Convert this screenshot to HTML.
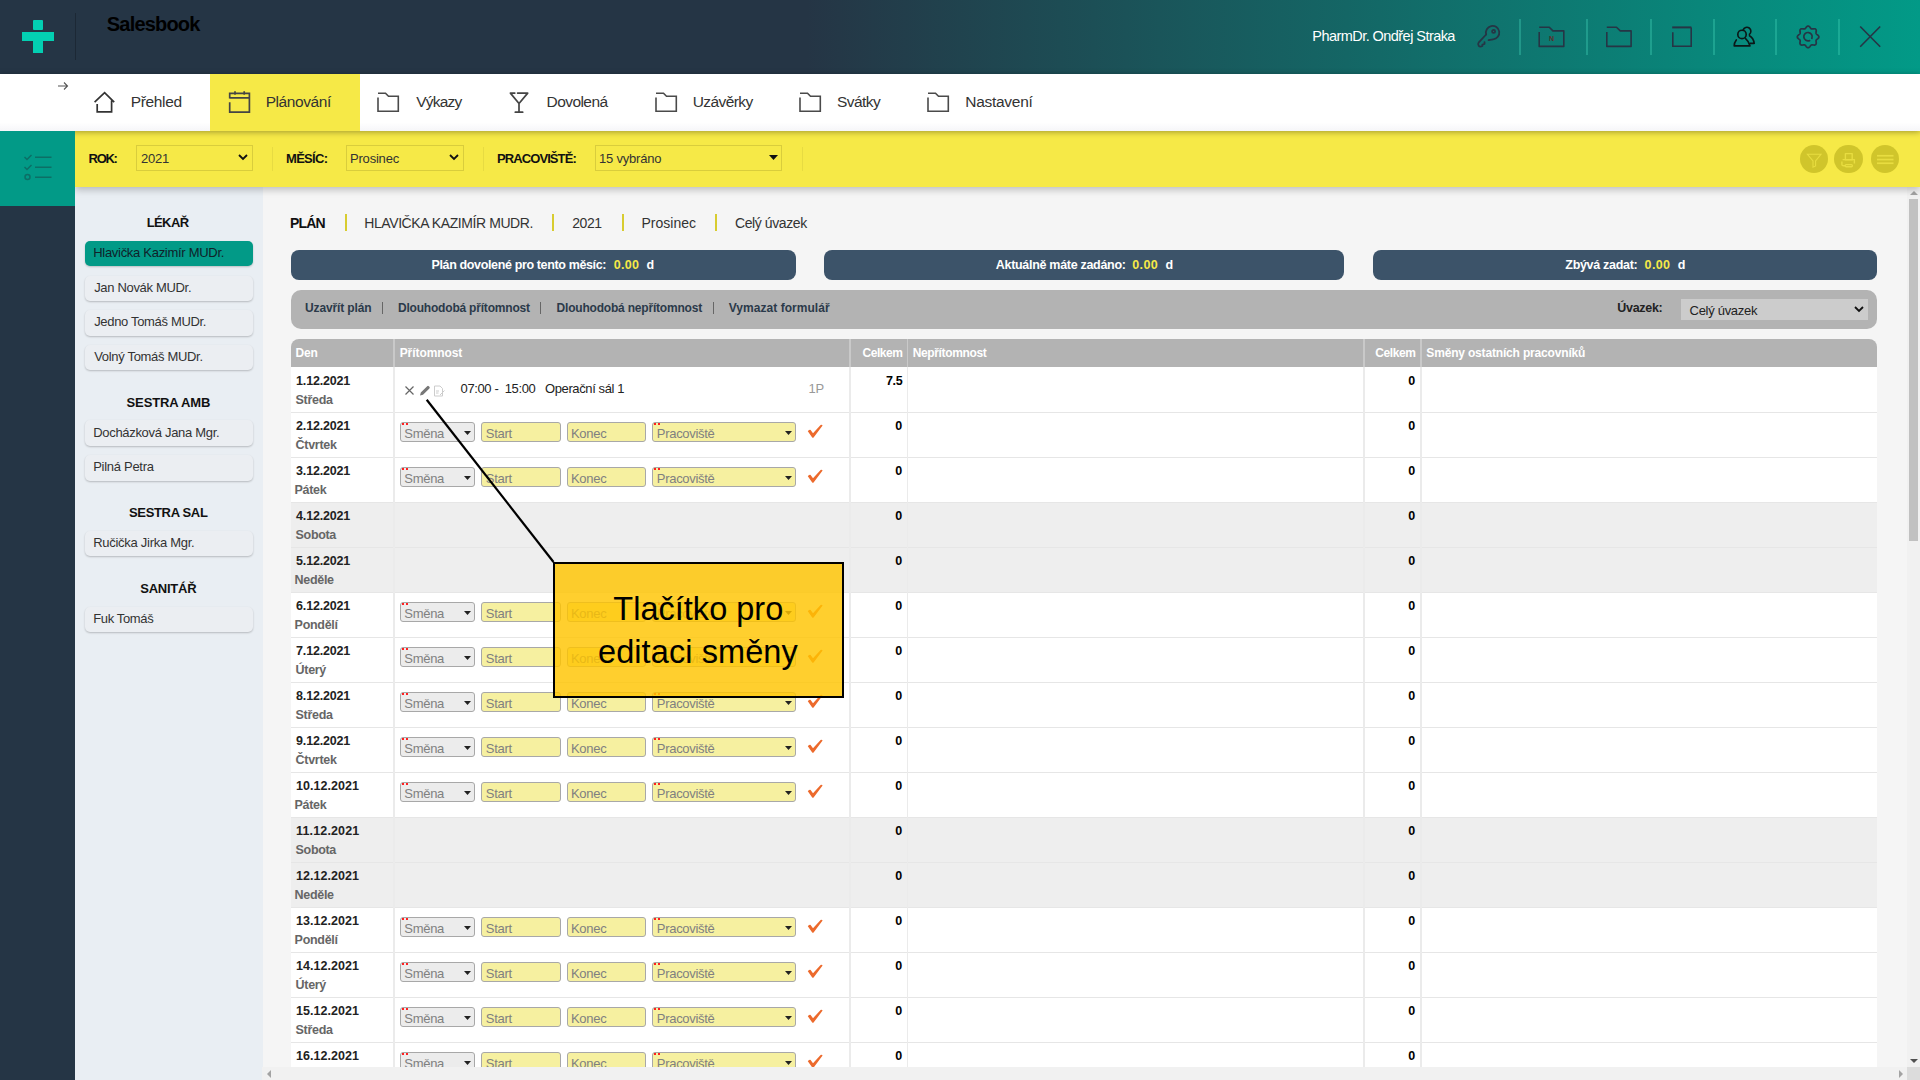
<!DOCTYPE html><html><head><meta charset="utf-8"><title>Salesbook</title><style>
*{box-sizing:border-box;margin:0;padding:0}
html,body{width:1920px;height:1080px;overflow:hidden;background:#f5f5f5;font-family:"Liberation Sans",sans-serif;color:#333}
.a{position:absolute}
.t{position:absolute;white-space:nowrap;line-height:1}
svg{overflow:visible}
</style></head><body>
<div class="a" style="left:0px;top:0px;width:1920px;height:74px;background:linear-gradient(90deg,#253545 0%,#253545 42%,#029a87 100%);"></div>
<div class="a" style="left:33px;top:20px;width:10px;height:10px;background:#03cfb2;border-radius:1px"></div>
<div class="a" style="left:22px;top:32px;width:32px;height:9px;background:#03cfb2;"></div>
<div class="a" style="left:33px;top:41px;width:10px;height:12px;background:#03cfb2;"></div>
<div class="a" style="left:75px;top:13px;width:1px;height:47px;background:#1c2835;"></div>
<div class="t" style="left:106.80px;top:14.17px;font-size:20px;font-weight:700;color:#000;letter-spacing:-0.812px;">Salesbook</div>
<div class="t" style="left:1312.30px;top:29.43px;font-size:14.5px;font-weight:400;color:#fff;letter-spacing:-0.552px;">PharmDr. Ondřej Straka</div>
<svg class="a" style="left:1476px;top:23px" width="26" height="26" viewBox="0 0 26 26"><g fill="none" stroke="#263545" stroke-width="1.8" stroke-linecap="round" stroke-linejoin="round"><path d="M10.15 11.5 A6.7 6.7 0 1 1 17.1 16.3 L12.6 17.2"/><path d="M10.15 11.5 L2.8 19.3 Q1.6 21.2 2.6 22.6 Q3.6 23.9 5.2 23.5 L6.4 23 V21.6 L8.5 21 V19.1"/><circle cx="17.6" cy="8.4" r="1.5"/></g></svg>
<div class="a" style="left:1519px;top:19px;width:1.5px;height:36px;background:rgba(70,215,185,0.35);"></div>
<div class="a" style="left:1586px;top:19px;width:1.5px;height:36px;background:rgba(70,215,185,0.35);"></div>
<div class="a" style="left:1650px;top:19px;width:1.5px;height:36px;background:rgba(70,215,185,0.35);"></div>
<div class="a" style="left:1713px;top:19px;width:1.5px;height:36px;background:rgba(70,215,185,0.35);"></div>
<div class="a" style="left:1775px;top:19px;width:1.5px;height:36px;background:rgba(70,215,185,0.35);"></div>
<div class="a" style="left:1838px;top:19px;width:1.5px;height:36px;background:rgba(70,215,185,0.35);"></div>
<svg class="a" style="left:1536px;top:24px" width="30" height="26" viewBox="0 0 30 26"><g fill="none" stroke="#263545" stroke-width="1.6" stroke-linejoin="round"><path d="M3.2 3.2 H13.3 L16.9 6.9 H27.8 V22.4 H3.2 V8"/></g><text x="15.6" y="16.9" text-anchor="middle" font-family="Liberation Sans" font-weight="700" font-size="7" fill="#5a2e2a">N</text></svg>
<svg class="a" style="left:1604px;top:24px" width="30" height="26" viewBox="0 0 30 26"><g fill="none" stroke="#263545" stroke-width="1.6" stroke-linejoin="round"><path d="M2.8 3.2 H12.5 L16.3 6.9 H27.1 V22.4 H2.8 V8"/></g></svg>
<svg class="a" style="left:1670px;top:24px" width="26" height="26" viewBox="0 0 26 26"><g fill="none" stroke="#263545"><path d="M2.2 3.4 H21.4" stroke-width="2"/><path d="M21.2 3.4 V22.2 H2.8 V8.2" stroke-width="1.6"/></g></svg>
<svg class="a" style="left:1728px;top:22px" width="32" height="28" viewBox="0 0 32 28"><g fill="none" stroke="#0b1818" stroke-width="1.65" stroke-linejoin="round" stroke-linecap="round"><circle cx="14" cy="12.4" r="4.2"/><path d="M15.2 7.9 A3.95 3.95 0 1 1 21.4 12.3"/><path d="M8.3 17.9 Q6.2 20.5 6.2 23.9 H22 Q21 19.5 17.6 16.6"/><path d="M21.5 13.7 Q25.5 16 26.2 21.3 H22"/></g></svg>
<svg class="a" style="left:1792px;top:22px" width="32" height="30" viewBox="0 0 32 30"><g fill="none" stroke="#263545" stroke-width="1.7" stroke-linecap="round"><path d="M26.90 14.90 L26.84 15.32 L26.67 15.73 L26.40 16.12 L26.05 16.48 L25.66 16.80 L25.27 17.10 L24.89 17.38 L24.56 17.65 L24.31 17.93 L24.14 18.23 L24.05 18.56 L24.03 18.94 L24.07 19.36 L24.14 19.82 L24.21 20.32 L24.25 20.82 L24.24 21.32 L24.16 21.78 L23.99 22.20 L23.74 22.54 L23.40 22.79 L22.98 22.96 L22.52 23.04 L22.02 23.05 L21.52 23.01 L21.02 22.94 L20.56 22.87 L20.14 22.83 L19.76 22.85 L19.43 22.94 L19.13 23.11 L18.85 23.36 L18.58 23.69 L18.30 24.07 L18.00 24.46 L17.68 24.85 L17.32 25.20 L16.93 25.47 L16.52 25.64 L16.10 25.70 L15.68 25.64 L15.27 25.47 L14.88 25.20 L14.52 24.85 L14.20 24.46 L13.90 24.07 L13.62 23.69 L13.35 23.36 L13.07 23.11 L12.77 22.94 L12.44 22.85 L12.06 22.83 L11.64 22.87 L11.18 22.94 L10.68 23.01 L10.18 23.05 L9.68 23.04 L9.22 22.96 L8.80 22.79 L8.46 22.54 L8.21 22.20 L8.04 21.78 L7.96 21.32 L7.95 20.82 L7.99 20.32 L8.06 19.82 L8.13 19.36 L8.17 18.94 L8.15 18.56 L8.06 18.23 L7.89 17.93 L7.64 17.65 L7.31 17.38 L6.93 17.10 L6.54 16.80 L6.15 16.48 L5.80 16.12 L5.53 15.73 L5.36 15.32 L5.30 14.90 L5.36 14.48 L5.53 14.07 L5.80 13.68 L6.15 13.32 L6.54 13.00 L6.93 12.70 L7.31 12.42 L7.64 12.15 L7.89 11.87 L8.06 11.57 L8.15 11.24 L8.17 10.86 L8.13 10.44 L8.06 9.98 L7.99 9.48 L7.95 8.98 L7.96 8.48 L8.04 8.02 L8.21 7.60 L8.46 7.26 L8.80 7.01 L9.22 6.84 L9.68 6.76 L10.18 6.75 L10.68 6.79 L11.18 6.86 L11.64 6.93 L12.06 6.97 L12.44 6.95 L12.77 6.86 L13.07 6.69 L13.35 6.44 L13.62 6.11 L13.90 5.73 L14.20 5.34 L14.52 4.95 L14.88 4.60 L15.27 4.33 L15.68 4.16 L16.10 4.10 L16.52 4.16 L16.93 4.33 L17.32 4.60 L17.68 4.95 L18.00 5.34 L18.30 5.73 L18.58 6.11 L18.85 6.44 L19.13 6.69 L19.43 6.86 L19.76 6.95 L20.14 6.97 L20.56 6.93 L21.02 6.86 L21.52 6.79 L22.02 6.75 L22.52 6.76 L22.98 6.84 L23.40 7.01 L23.74 7.26 L23.99 7.60 L24.16 8.02 L24.24 8.48 L24.25 8.98 L24.21 9.48 L24.14 9.98 L24.07 10.44 L24.03 10.86 L24.05 11.24 L24.14 11.57 L24.31 11.87 L24.56 12.15 L24.89 12.42 L25.27 12.70 L25.66 13.00 L26.05 13.32 L26.40 13.68 L26.67 14.07 L26.84 14.48Z"/><path d="M19.87 16.34 A4.2 4.2 0 1 0 17.57 18.59"/></g></svg>
<svg class="a" style="left:1859px;top:25px" width="23" height="23" viewBox="0 0 23 23"><g fill="none" stroke="#263545" stroke-width="1.6"><path d="M1.2 1.5 L21.2 21.8 M21.2 1.5 L1.2 21.8"/></g></svg>
<div class="a" style="left:1907px;top:187px;width:13px;height:880px;background:#f1f1f1;"></div>
<div class="a" style="left:1909px;top:199px;width:9px;height:342px;background:#c1c1c1;"></div>
<svg class="a" style="left:1908.5px;top:189px" width="10" height="8" viewBox="0 0 10 8"><path d="M1 6 H9 L5 2 Z" fill="#a3a3a3"/></svg>
<svg class="a" style="left:1908.5px;top:1057px" width="10" height="8" viewBox="0 0 10 8"><path d="M1 2 H9 L5 6 Z" fill="#505050"/></svg>
<div class="a" style="left:75px;top:187px;width:188px;height:893px;background:#e9eef3;"></div>
<div class="a" style="left:75px;top:131px;width:1845px;height:56px;background:#f6e947;box-shadow:0 3px 7px rgba(0,0,0,0.22)"></div>
<div class="a" style="left:0px;top:74px;width:1920px;height:57px;background:linear-gradient(180deg,#fff 0%,#fff 85%,#f6f6f9 100%);box-shadow:0 1px 6px rgba(0,0,0,0.35)"></div>
<div class="a" style="left:210px;top:74px;width:150px;height:57px;background:#f6e947;"></div>
<svg class="a" style="left:56px;top:80px" width="14" height="12" viewBox="0 0 14 12"><g fill="none" stroke="#555" stroke-width="1.1"><path d="M2 6 H11.5 M8 2.5 L11.5 6 L8 9.5"/></g></svg>
<svg class="a" style="left:92px;top:90px" width="24" height="24" viewBox="0 0 24 24"><g fill="none" stroke="#333" stroke-width="1.7" stroke-linejoin="miter"><path d="M2.6 12.2 L12.6 2.6 L22.2 12.2 M5.2 13.9 V21.8 H19.6 V10.4"/></g></svg>
<div class="t" style="left:130.70px;top:94.08px;font-size:15.5px;font-weight:400;color:#333;letter-spacing:-0.333px;">Přehled</div>
<svg class="a" style="left:228px;top:90px" width="24" height="24" viewBox="0 0 24 24"><g fill="none" stroke="#444" stroke-width="1.7"><path d="M1.7 8.6 V3.4 H21.4 V22.2 H1.7 V12.2 M1.7 7.8 H21.4 M7 1.2 V4.8 M16.2 1.2 V4.8"/></g></svg>
<div class="t" style="left:265.70px;top:94.08px;font-size:15.5px;font-weight:400;color:#333;letter-spacing:-0.425px;">Plánování</div>
<svg class="a" style="left:377px;top:91px" width="24" height="22" viewBox="0 0 24 22"><g fill="none" stroke="#4a4a4a" stroke-width="1.6"><path d="M1 2.3 H8.5 L11.5 5.3 H21.3 V20.3 H1 V6.5"/></g></svg>
<div class="t" style="left:416.20px;top:94.08px;font-size:15.5px;font-weight:400;color:#333;letter-spacing:-0.760px;">Výkazy</div>
<svg class="a" style="left:508px;top:90px" width="24" height="24" viewBox="0 0 24 24"><g fill="none" stroke="#444" stroke-width="1.7" stroke-linecap="round" stroke-linejoin="round"><path d="M6.8 3.1 H2.4 L11 13.5 L19.7 3.1 H9.6 M11 13.5 V22 M7.3 22.2 H14.7"/></g></svg>
<div class="t" style="left:546.50px;top:94.08px;font-size:15.5px;font-weight:400;color:#333;letter-spacing:-0.557px;">Dovolená</div>
<svg class="a" style="left:655px;top:91px" width="24" height="22" viewBox="0 0 24 22"><g fill="none" stroke="#4a4a4a" stroke-width="1.6"><path d="M1 2.3 H8.5 L11.5 5.3 H21.3 V20.3 H1 V6.5"/></g></svg>
<div class="t" style="left:692.70px;top:94.08px;font-size:15.5px;font-weight:400;color:#333;letter-spacing:-0.571px;">Uzávěrky</div>
<svg class="a" style="left:799px;top:91px" width="24" height="22" viewBox="0 0 24 22"><g fill="none" stroke="#4a4a4a" stroke-width="1.6"><path d="M1 2.3 H8.5 L11.5 5.3 H21.3 V20.3 H1 V6.5"/></g></svg>
<div class="t" style="left:837.00px;top:94.08px;font-size:15.5px;font-weight:400;color:#333;letter-spacing:-0.560px;">Svátky</div>
<svg class="a" style="left:927px;top:91px" width="24" height="22" viewBox="0 0 24 22"><g fill="none" stroke="#4a4a4a" stroke-width="1.6"><path d="M1 2.3 H8.5 L11.5 5.3 H21.3 V20.3 H1 V6.5"/></g></svg>
<div class="t" style="left:965.30px;top:94.08px;font-size:15.5px;font-weight:400;color:#333;letter-spacing:-0.287px;">Nastavení</div>
<div class="a" style="left:0px;top:131px;width:75px;height:949px;background:#253545;"></div>
<div class="a" style="left:0px;top:131px;width:75px;height:75px;background:#029a87;"></div>
<svg class="a" style="left:22px;top:152px" width="32" height="30" viewBox="0 0 32 30"><g fill="none" stroke="#0c6f66" stroke-width="1.5"><path d="M2.5 5 L5 7.5 L9.5 3 M2.5 15 L5 17.5 L9.5 13"/><circle cx="5.5" cy="25" r="2.5"/><path d="M13 5.2 H29.5 M13 15.2 H29.5 M13 25.2 H29.5"/></g></svg>
<div class="t" style="left:88.60px;top:152.00px;font-size:13px;font-weight:700;color:#111;letter-spacing:-1.300px;">ROK:</div>
<div class="a" style="left:136px;top:145px;width:117px;height:26px;background:transparent;border:1px solid #d9cd3c"></div>
<div class="t" style="left:141.00px;top:151.50px;font-size:13px;font-weight:400;color:#333;letter-spacing:-0.200px;">2021</div>
<svg class="a" style="left:238px;top:154px" width="10" height="7" viewBox="0 0 10 7"><path d="M1 1 L5 5 L9 1" fill="none" stroke="#111" stroke-width="1.8"/></svg>
<div class="a" style="left:272px;top:147px;width:1px;height:24px;background:rgba(0,0,0,0.06);"></div>
<div class="t" style="left:286.00px;top:152.00px;font-size:13px;font-weight:700;color:#111;letter-spacing:-0.700px;">MĚSÍC:</div>
<div class="a" style="left:346px;top:145px;width:118px;height:26px;background:transparent;border:1px solid #d9cd3c"></div>
<div class="t" style="left:350.00px;top:151.50px;font-size:13px;font-weight:400;color:#333;letter-spacing:-0.200px;">Prosinec</div>
<svg class="a" style="left:449px;top:154px" width="10" height="7" viewBox="0 0 10 7"><path d="M1 1 L5 5 L9 1" fill="none" stroke="#111" stroke-width="1.8"/></svg>
<div class="a" style="left:483px;top:147px;width:1px;height:24px;background:rgba(0,0,0,0.06);"></div>
<div class="t" style="left:497.00px;top:152.00px;font-size:13px;font-weight:700;color:#111;letter-spacing:-0.910px;">PRACOVIŠTĚ:</div>
<div class="a" style="left:595px;top:145px;width:187px;height:26px;background:transparent;border:1px solid #d9cd3c"></div>
<div class="t" style="left:599.00px;top:151.50px;font-size:13px;font-weight:400;color:#333;letter-spacing:-0.200px;">15 vybráno</div>
<svg class="a" style="left:769px;top:155px" width="9" height="6" viewBox="0 0 9 6"><path d="M0 0 H9 L4.5 5 Z" fill="#111"/></svg>
<div class="a" style="left:802px;top:147px;width:1px;height:24px;background:rgba(0,0,0,0.06);"></div>
<div class="a" style="left:1799.55px;top:144.6px;width:28.4px;height:28.4px;background:#d0c52b;border-radius:50%"></div>
<div class="a" style="left:1834.3px;top:144.6px;width:28.4px;height:28.4px;background:#d0c52b;border-radius:50%"></div>
<div class="a" style="left:1870.8px;top:144.6px;width:28.4px;height:28.4px;background:#d0c52b;border-radius:50%"></div>
<svg class="a" style="left:1799.6px;top:144.6px" width="28.4" height="28.4" viewBox="0 0 28.4 28.4"><g fill="none" stroke="#e8dd40" stroke-width="1.1"><path d="M7.4 9.3 H21 L15.6 16 V21 L13 22.2 V16 Z"/></g></svg>
<svg class="a" style="left:1834.3px;top:144.6px" width="28.4" height="28.4" viewBox="0 0 28.4 28.4"><g fill="none" stroke="#e8dd40" stroke-width="1.4" stroke-linejoin="round"><rect x="11.4" y="8.6" width="6.8" height="6.3"/><path d="M8.6 14.6 H20.4 V18.6"/><path d="M7.9 16.6 V19.6 Q7.9 20.8 9.6 20.8 H11"/><rect x="11.2" y="19.6" width="7.2" height="2.1" rx="1"/></g></svg>
<svg class="a" style="left:1870.8px;top:144.6px" width="28.4" height="28.4" viewBox="0 0 28.4 28.4"><g fill="#e8dd40"><rect x="6" y="9.9" width="16.5" height="1.7"/><rect x="6" y="13.7" width="16.5" height="1.7"/><rect x="6" y="17.4" width="16.5" height="1.7"/></g></svg>
<div class="t" style="left:146.75px;top:216.10px;font-size:13px;font-weight:700;color:#111;letter-spacing:-0.625px;">LÉKAŘ</div>
<div class="a" style="left:85px;top:240.7px;width:168px;height:25.5px;background:#029a87;border-radius:5px;box-shadow:0 1px 2px rgba(0,0,0,0.2)"></div>
<div class="t" style="left:93.20px;top:246.10px;font-size:13px;font-weight:400;color:#10222a;letter-spacing:-0.289px;">Hlavička Kazimír MUDr.</div>
<div class="a" style="left:85px;top:275.5px;width:168px;height:25.5px;background:#ebeef2;border-radius:5px;box-shadow:0 1px 2px rgba(0,0,0,0.22)"></div>
<div class="t" style="left:94.20px;top:280.90px;font-size:13px;font-weight:400;color:#333;letter-spacing:-0.325px;">Jan Novák MUDr.</div>
<div class="a" style="left:85px;top:310px;width:168px;height:25.5px;background:#ebeef2;border-radius:5px;box-shadow:0 1px 2px rgba(0,0,0,0.22)"></div>
<div class="t" style="left:94.20px;top:315.40px;font-size:13px;font-weight:400;color:#333;letter-spacing:-0.329px;">Jedno Tomáš MUDr.</div>
<div class="a" style="left:85px;top:344.7px;width:168px;height:25.5px;background:#ebeef2;border-radius:5px;box-shadow:0 1px 2px rgba(0,0,0,0.22)"></div>
<div class="t" style="left:94.20px;top:350.10px;font-size:13px;font-weight:400;color:#333;letter-spacing:-0.318px;">Volný Tomáš MUDr.</div>
<div class="t" style="left:126.55px;top:396.20px;font-size:13px;font-weight:700;color:#111;letter-spacing:-0.122px;">SESTRA AMB</div>
<div class="a" style="left:85px;top:420.2px;width:168px;height:25.5px;background:#ebeef2;border-radius:5px;box-shadow:0 1px 2px rgba(0,0,0,0.22)"></div>
<div class="t" style="left:93.20px;top:425.60px;font-size:13px;font-weight:400;color:#333;letter-spacing:-0.308px;">Docházková Jana Mgr.</div>
<div class="a" style="left:85px;top:455px;width:168px;height:25.5px;background:#ebeef2;border-radius:5px;box-shadow:0 1px 2px rgba(0,0,0,0.22)"></div>
<div class="t" style="left:93.20px;top:460.40px;font-size:13px;font-weight:400;color:#333;letter-spacing:-0.284px;">Pilná Petra</div>
<div class="t" style="left:129.00px;top:506.30px;font-size:13px;font-weight:700;color:#111;letter-spacing:-0.333px;">SESTRA SAL</div>
<div class="a" style="left:85px;top:530.8px;width:168px;height:25.5px;background:#ebeef2;border-radius:5px;box-shadow:0 1px 2px rgba(0,0,0,0.22)"></div>
<div class="t" style="left:93.20px;top:536.20px;font-size:13px;font-weight:400;color:#333;letter-spacing:-0.275px;">Ručička Jirka Mgr.</div>
<div class="t" style="left:140.25px;top:582.00px;font-size:13px;font-weight:700;color:#111;letter-spacing:-0.250px;">SANITÁŘ</div>
<div class="a" style="left:85px;top:606.7px;width:168px;height:25.5px;background:#ebeef2;border-radius:5px;box-shadow:0 1px 2px rgba(0,0,0,0.22)"></div>
<div class="t" style="left:93.20px;top:612.10px;font-size:13px;font-weight:400;color:#333;letter-spacing:-0.349px;">Fuk Tomáš</div>
<div class="t" style="left:290.00px;top:215.65px;font-size:14px;font-weight:700;color:#111;letter-spacing:-0.800px;">PLÁN</div>
<div class="a" style="left:345px;top:214px;width:2px;height:17px;background:#d8cc30;"></div>
<div class="a" style="left:552px;top:214px;width:2px;height:17px;background:#d8cc30;"></div>
<div class="a" style="left:622px;top:214px;width:2px;height:17px;background:#d8cc30;"></div>
<div class="a" style="left:715px;top:214px;width:2px;height:17px;background:#d8cc30;"></div>
<div class="t" style="left:364.30px;top:215.65px;font-size:14px;font-weight:400;color:#333;letter-spacing:-0.419px;">HLAVIČKA KAZIMÍR MUDR.</div>
<div class="t" style="left:572.20px;top:215.65px;font-size:14px;font-weight:400;color:#333;letter-spacing:-0.433px;">2021</div>
<div class="t" style="left:641.50px;top:215.65px;font-size:14px;font-weight:400;color:#333;letter-spacing:0.014px;">Prosinec</div>
<div class="t" style="left:735.00px;top:215.65px;font-size:14px;font-weight:400;color:#333;letter-spacing:-0.410px;">Celý úvazek</div>
<div class="a" style="left:291px;top:249.5px;width:505px;height:30.5px;background:#3c5369;border-radius:8px"></div>
<div class="t" style="left:431.50px;top:258.52px;font-size:12.5px;font-weight:700;color:#fff;letter-spacing:-0.362px;">Plán dovolené pro tento měsíc:</div>
<div class="t" style="left:613.70px;top:258.52px;font-size:12.5px;font-weight:700;color:#f6e947;letter-spacing:0.333px;">0.00</div>
<div class="t" style="left:646.60px;top:258.52px;font-size:12.5px;font-weight:700;color:#fff;letter-spacing:0.000px;">d</div>
<div class="a" style="left:823.5px;top:249.5px;width:520.5px;height:30.5px;background:#3c5369;border-radius:8px"></div>
<div class="t" style="left:995.80px;top:258.52px;font-size:12.5px;font-weight:700;color:#fff;letter-spacing:-0.300px;">Aktuálně máte zadáno:</div>
<div class="t" style="left:1132.30px;top:258.52px;font-size:12.5px;font-weight:700;color:#f6e947;letter-spacing:0.333px;">0.00</div>
<div class="t" style="left:1165.60px;top:258.52px;font-size:12.5px;font-weight:700;color:#fff;letter-spacing:0.000px;">d</div>
<div class="a" style="left:1372.7px;top:249.5px;width:504.29999999999995px;height:30.5px;background:#3c5369;border-radius:8px"></div>
<div class="t" style="left:1565.30px;top:258.52px;font-size:12.5px;font-weight:700;color:#fff;letter-spacing:-0.300px;">Zbývá zadat:</div>
<div class="t" style="left:1644.60px;top:258.52px;font-size:12.5px;font-weight:700;color:#f6e947;letter-spacing:0.333px;">0.00</div>
<div class="t" style="left:1677.80px;top:258.52px;font-size:12.5px;font-weight:700;color:#fff;letter-spacing:0.000px;">d</div>
<div class="a" style="left:291px;top:289.8px;width:1586px;height:39px;background:#b3b3b3;border-radius:10px"></div>
<div class="t" style="left:305.00px;top:301.64px;font-size:12px;font-weight:700;color:#2b3a4a;letter-spacing:-0.127px;">Uzavřít plán</div>
<div class="t" style="left:398.00px;top:301.64px;font-size:12px;font-weight:700;color:#2b3a4a;letter-spacing:-0.200px;">Dlouhodobá přítomnost</div>
<div class="t" style="left:556.60px;top:301.64px;font-size:12px;font-weight:700;color:#2b3a4a;letter-spacing:-0.200px;">Dlouhodobá nepřítomnost</div>
<div class="t" style="left:728.70px;top:301.64px;font-size:12px;font-weight:700;color:#2b3a4a;letter-spacing:0.047px;">Vymazat formulář</div>
<div class="a" style="left:382px;top:302px;width:1.2px;height:12px;background:#666;"></div>
<div class="a" style="left:540px;top:302px;width:1.2px;height:12px;background:#666;"></div>
<div class="a" style="left:712.5px;top:302px;width:1.2px;height:12px;background:#666;"></div>
<div class="t" style="left:1617.30px;top:302.22px;font-size:12.5px;font-weight:700;color:#222;letter-spacing:-0.300px;">Úvazek:</div>
<div class="a" style="left:1680.6px;top:299px;width:187.6px;height:21px;background:#cccccc;"></div>
<div class="t" style="left:1689.60px;top:303.50px;font-size:13px;font-weight:400;color:#222;letter-spacing:-0.300px;">Celý úvazek</div>
<svg class="a" style="left:1854px;top:306px" width="10" height="7" viewBox="0 0 10 7"><path d="M1 1 L5 5 L9 1" fill="none" stroke="#111" stroke-width="1.8"/></svg>
<div class="a" style="left:291px;top:339px;width:1586px;height:28px;background:#b3b3b3;border-radius:8px 8px 0 0"></div>
<div class="a" style="left:393.25px;top:339px;width:1.5px;height:28px;background:#c9c9c9;"></div>
<div class="a" style="left:849.45px;top:339px;width:1.5px;height:28px;background:#c9c9c9;"></div>
<div class="a" style="left:906.95px;top:339px;width:1.5px;height:28px;background:#c9c9c9;"></div>
<div class="a" style="left:1363.25px;top:339px;width:1.5px;height:28px;background:#c9c9c9;"></div>
<div class="a" style="left:1420.25px;top:339px;width:1.5px;height:28px;background:#c9c9c9;"></div>
<div class="t" style="left:295.60px;top:346.74px;font-size:12px;font-weight:700;color:#fff;letter-spacing:-0.200px;">Den</div>
<div class="t" style="left:399.70px;top:346.74px;font-size:12px;font-weight:700;color:#fff;letter-spacing:-0.078px;">Přítomnost</div>
<div class="t" style="left:862.40px;top:346.74px;font-size:12px;font-weight:700;color:#fff;letter-spacing:-0.420px;">Celkem</div>
<div class="t" style="left:912.70px;top:346.74px;font-size:12px;font-weight:700;color:#fff;letter-spacing:-0.355px;">Nepřítomnost</div>
<div class="t" style="left:1375.30px;top:346.74px;font-size:12px;font-weight:700;color:#fff;letter-spacing:-0.420px;">Celkem</div>
<div class="t" style="left:1426.30px;top:346.74px;font-size:12px;font-weight:700;color:#fff;letter-spacing:-0.172px;">Směny ostatních pracovníků</div>
<div class="a" style="left:0;top:0;width:1920px;height:1067px;overflow:hidden">
<div class="a" style="left:291px;top:367px;width:1586px;height:45px;background:#ffffff;"></div>
<div class="a" style="left:291px;top:412px;width:1586px;height:45px;background:#ffffff;"></div>
<div class="a" style="left:291px;top:457px;width:1586px;height:45px;background:#ffffff;"></div>
<div class="a" style="left:291px;top:502px;width:1586px;height:45px;background:#eeeeee;"></div>
<div class="a" style="left:291px;top:547px;width:1586px;height:45px;background:#eeeeee;"></div>
<div class="a" style="left:291px;top:592px;width:1586px;height:45px;background:#ffffff;"></div>
<div class="a" style="left:291px;top:637px;width:1586px;height:45px;background:#ffffff;"></div>
<div class="a" style="left:291px;top:682px;width:1586px;height:45px;background:#ffffff;"></div>
<div class="a" style="left:291px;top:727px;width:1586px;height:45px;background:#ffffff;"></div>
<div class="a" style="left:291px;top:772px;width:1586px;height:45px;background:#ffffff;"></div>
<div class="a" style="left:291px;top:817px;width:1586px;height:45px;background:#eeeeee;"></div>
<div class="a" style="left:291px;top:862px;width:1586px;height:45px;background:#eeeeee;"></div>
<div class="a" style="left:291px;top:907px;width:1586px;height:45px;background:#ffffff;"></div>
<div class="a" style="left:291px;top:952px;width:1586px;height:45px;background:#ffffff;"></div>
<div class="a" style="left:291px;top:997px;width:1586px;height:45px;background:#ffffff;"></div>
<div class="a" style="left:291px;top:1042px;width:1586px;height:45px;background:#ffffff;"></div>
<div class="a" style="left:291px;top:412px;width:1586px;height:1px;background:#e6e6e6;"></div>
<div class="a" style="left:291px;top:457px;width:1586px;height:1px;background:#e6e6e6;"></div>
<div class="a" style="left:291px;top:502px;width:1586px;height:1px;background:#e6e6e6;"></div>
<div class="a" style="left:291px;top:547px;width:1586px;height:1px;background:#e6e6e6;"></div>
<div class="a" style="left:291px;top:592px;width:1586px;height:1px;background:#e6e6e6;"></div>
<div class="a" style="left:291px;top:637px;width:1586px;height:1px;background:#e6e6e6;"></div>
<div class="a" style="left:291px;top:682px;width:1586px;height:1px;background:#e6e6e6;"></div>
<div class="a" style="left:291px;top:727px;width:1586px;height:1px;background:#e6e6e6;"></div>
<div class="a" style="left:291px;top:772px;width:1586px;height:1px;background:#e6e6e6;"></div>
<div class="a" style="left:291px;top:817px;width:1586px;height:1px;background:#e6e6e6;"></div>
<div class="a" style="left:291px;top:862px;width:1586px;height:1px;background:#e6e6e6;"></div>
<div class="a" style="left:291px;top:907px;width:1586px;height:1px;background:#e6e6e6;"></div>
<div class="a" style="left:291px;top:952px;width:1586px;height:1px;background:#e6e6e6;"></div>
<div class="a" style="left:291px;top:997px;width:1586px;height:1px;background:#e6e6e6;"></div>
<div class="a" style="left:291px;top:1042px;width:1586px;height:1px;background:#e6e6e6;"></div>
<div class="a" style="left:291px;top:1087px;width:1586px;height:1px;background:#e6e6e6;"></div>
<div class="a" style="left:393.25px;top:367px;width:1.5px;height:700px;background:#ebebeb;"></div>
<div class="a" style="left:849.45px;top:367px;width:1.5px;height:700px;background:#ebebeb;"></div>
<div class="a" style="left:906.95px;top:367px;width:1.5px;height:700px;background:#ebebeb;"></div>
<div class="a" style="left:1363.25px;top:367px;width:1.5px;height:700px;background:#ebebeb;"></div>
<div class="a" style="left:1420.25px;top:367px;width:1.5px;height:700px;background:#ebebeb;"></div>
<div class="t" style="left:296.10px;top:374.82px;font-size:12.5px;font-weight:700;color:#222;letter-spacing:-0.175px;">1.12.2021</div>
<div class="t" style="left:295.60px;top:393.92px;font-size:12.5px;font-weight:700;color:#666;letter-spacing:-0.312px;">Středa</div>
<div class="t" style="left:885.98px;top:374.82px;font-size:12.5px;font-weight:700;color:#000;letter-spacing:-0.340px;">7.5</div>
<div class="t" style="left:1408.20px;top:374.82px;font-size:12.5px;font-weight:700;color:#000;letter-spacing:0.000px;">0</div>
<svg class="a" style="left:404px;top:385px" width="11" height="11" viewBox="0 0 11 11"><path d="M1.5 1.5 L9.5 9.5 M9.5 1.5 L1.5 9.5" stroke="#666" stroke-width="1.2" fill="none"/></svg>
<svg class="a" style="left:418px;top:384px" width="13" height="13" viewBox="0 0 13 13"><path d="M2 11.5 L2.8 8.6 L9.2 2.2 Q10 1.4 10.8 2.2 L11.4 2.8 Q12.2 3.6 11.4 4.4 L5 10.8 Z" fill="#777"/></svg>
<svg class="a" style="left:433px;top:385px" width="13" height="12" viewBox="0 0 13 12"><g fill="none" stroke="#ccc" stroke-width="1"><path d="M1.5 1 H7 L9.5 3.5 V11 H1.5 Z"/><path d="M3 6 H6 M3 8 H5.5"/><path d="M7 10 L11.5 5.5"/></g></svg>
<div class="t" style="left:460.60px;top:382.00px;font-size:13px;font-weight:400;color:#222;letter-spacing:-0.390px;">07:00 -&nbsp; 15:00 &nbsp; Operační sál 1</div>
<div class="t" style="left:808.60px;top:382.00px;font-size:13px;font-weight:400;color:#999;letter-spacing:-0.200px;">1P</div>
<div class="t" style="left:296.10px;top:419.82px;font-size:12.5px;font-weight:700;color:#222;letter-spacing:-0.175px;">2.12.2021</div>
<div class="t" style="left:295.60px;top:438.92px;font-size:12.5px;font-weight:700;color:#666;letter-spacing:-0.287px;">Čtvrtek</div>
<div class="t" style="left:895.30px;top:419.82px;font-size:12.5px;font-weight:700;color:#000;letter-spacing:0.000px;">0</div>
<div class="t" style="left:1408.20px;top:419.82px;font-size:12.5px;font-weight:700;color:#000;letter-spacing:0.000px;">0</div>
<div class="a" style="left:400px;top:422.3px;width:75px;height:20.2px;background:#ececec;border:1px solid #a8a8a8;border-radius:3px"></div>
<div class="a" style="left:401.5px;top:422.90000000000003px;width:2.6px;height:2.6px;background:#ff2020;"></div>
<div class="a" style="left:405.6px;top:422.90000000000003px;width:2.6px;height:2.6px;background:#ff2020;"></div>
<div class="t" style="left:404.30px;top:426.90px;font-size:13px;font-weight:400;color:#808080;letter-spacing:-0.300px;">Směna</div>
<svg class="a" style="left:463.5px;top:430.5px" width="8" height="5" viewBox="0 0 8 5"><path d="M0 0 H7 L3.5 4 Z" fill="#222"/></svg>
<div class="a" style="left:481px;top:422.3px;width:79.5px;height:20.2px;background:#f6f0a0;border:1px solid #a8a8a8;border-radius:3px"></div>
<div class="t" style="left:485.80px;top:426.90px;font-size:13px;font-weight:400;color:#808080;letter-spacing:-0.300px;">Start</div>
<div class="a" style="left:566.6px;top:422.3px;width:79.7px;height:20.2px;background:#f6f0a0;border:1px solid #a8a8a8;border-radius:3px"></div>
<div class="t" style="left:571.00px;top:426.90px;font-size:13px;font-weight:400;color:#808080;letter-spacing:-0.300px;">Konec</div>
<div class="a" style="left:652px;top:422.3px;width:143.7px;height:20.2px;background:#f6f0a0;border:1px solid #a8a8a8;border-radius:3px"></div>
<div class="a" style="left:653.5px;top:422.90000000000003px;width:2.6px;height:2.6px;background:#ff2020;"></div>
<div class="a" style="left:657.6px;top:422.90000000000003px;width:2.6px;height:2.6px;background:#ff2020;"></div>
<div class="t" style="left:656.80px;top:426.90px;font-size:13px;font-weight:400;color:#808080;letter-spacing:-0.300px;">Pracoviště</div>
<svg class="a" style="left:784.5px;top:430.5px" width="8" height="5" viewBox="0 0 8 5"><path d="M0 0 H7 L3.5 4 Z" fill="#222"/></svg>
<svg class="a" style="left:806px;top:424px" width="18" height="15" viewBox="0 0 18 15"><path d="M1.8 7.2 Q3.2 5.6 4.6 5.9 L7 9.2 L14.6 0.9 Q16 0.6 16.6 1.6 L7.6 13.6 Q6.8 14.2 6.2 13.4 Z" fill="#ec6a2c"/></svg>
<div class="t" style="left:296.10px;top:464.82px;font-size:12.5px;font-weight:700;color:#222;letter-spacing:-0.175px;">3.12.2021</div>
<div class="t" style="left:294.60px;top:483.92px;font-size:12.5px;font-weight:700;color:#666;letter-spacing:-0.330px;">Pátek</div>
<div class="t" style="left:895.30px;top:464.82px;font-size:12.5px;font-weight:700;color:#000;letter-spacing:0.000px;">0</div>
<div class="t" style="left:1408.20px;top:464.82px;font-size:12.5px;font-weight:700;color:#000;letter-spacing:0.000px;">0</div>
<div class="a" style="left:400px;top:467.3px;width:75px;height:20.2px;background:#ececec;border:1px solid #a8a8a8;border-radius:3px"></div>
<div class="a" style="left:401.5px;top:467.90000000000003px;width:2.6px;height:2.6px;background:#ff2020;"></div>
<div class="a" style="left:405.6px;top:467.90000000000003px;width:2.6px;height:2.6px;background:#ff2020;"></div>
<div class="t" style="left:404.30px;top:471.90px;font-size:13px;font-weight:400;color:#808080;letter-spacing:-0.300px;">Směna</div>
<svg class="a" style="left:463.5px;top:475.5px" width="8" height="5" viewBox="0 0 8 5"><path d="M0 0 H7 L3.5 4 Z" fill="#222"/></svg>
<div class="a" style="left:481px;top:467.3px;width:79.5px;height:20.2px;background:#f6f0a0;border:1px solid #a8a8a8;border-radius:3px"></div>
<div class="t" style="left:485.80px;top:471.90px;font-size:13px;font-weight:400;color:#808080;letter-spacing:-0.300px;">Start</div>
<div class="a" style="left:566.6px;top:467.3px;width:79.7px;height:20.2px;background:#f6f0a0;border:1px solid #a8a8a8;border-radius:3px"></div>
<div class="t" style="left:571.00px;top:471.90px;font-size:13px;font-weight:400;color:#808080;letter-spacing:-0.300px;">Konec</div>
<div class="a" style="left:652px;top:467.3px;width:143.7px;height:20.2px;background:#f6f0a0;border:1px solid #a8a8a8;border-radius:3px"></div>
<div class="a" style="left:653.5px;top:467.90000000000003px;width:2.6px;height:2.6px;background:#ff2020;"></div>
<div class="a" style="left:657.6px;top:467.90000000000003px;width:2.6px;height:2.6px;background:#ff2020;"></div>
<div class="t" style="left:656.80px;top:471.90px;font-size:13px;font-weight:400;color:#808080;letter-spacing:-0.300px;">Pracoviště</div>
<svg class="a" style="left:784.5px;top:475.5px" width="8" height="5" viewBox="0 0 8 5"><path d="M0 0 H7 L3.5 4 Z" fill="#222"/></svg>
<svg class="a" style="left:806px;top:469px" width="18" height="15" viewBox="0 0 18 15"><path d="M1.8 7.2 Q3.2 5.6 4.6 5.9 L7 9.2 L14.6 0.9 Q16 0.6 16.6 1.6 L7.6 13.6 Q6.8 14.2 6.2 13.4 Z" fill="#ec6a2c"/></svg>
<div class="t" style="left:296.10px;top:509.82px;font-size:12.5px;font-weight:700;color:#222;letter-spacing:-0.175px;">4.12.2021</div>
<div class="t" style="left:295.60px;top:528.92px;font-size:12.5px;font-weight:700;color:#666;letter-spacing:-0.344px;">Sobota</div>
<div class="t" style="left:895.30px;top:509.82px;font-size:12.5px;font-weight:700;color:#000;letter-spacing:0.000px;">0</div>
<div class="t" style="left:1408.20px;top:509.82px;font-size:12.5px;font-weight:700;color:#000;letter-spacing:0.000px;">0</div>
<div class="t" style="left:296.10px;top:554.82px;font-size:12.5px;font-weight:700;color:#222;letter-spacing:-0.175px;">5.12.2021</div>
<div class="t" style="left:294.60px;top:573.92px;font-size:12.5px;font-weight:700;color:#666;letter-spacing:-0.320px;">Neděle</div>
<div class="t" style="left:895.30px;top:554.82px;font-size:12.5px;font-weight:700;color:#000;letter-spacing:0.000px;">0</div>
<div class="t" style="left:1408.20px;top:554.82px;font-size:12.5px;font-weight:700;color:#000;letter-spacing:0.000px;">0</div>
<div class="t" style="left:296.10px;top:599.82px;font-size:12.5px;font-weight:700;color:#222;letter-spacing:-0.175px;">6.12.2021</div>
<div class="t" style="left:294.60px;top:618.92px;font-size:12.5px;font-weight:700;color:#666;letter-spacing:-0.300px;">Pondělí</div>
<div class="t" style="left:895.30px;top:599.82px;font-size:12.5px;font-weight:700;color:#000;letter-spacing:0.000px;">0</div>
<div class="t" style="left:1408.20px;top:599.82px;font-size:12.5px;font-weight:700;color:#000;letter-spacing:0.000px;">0</div>
<div class="a" style="left:400px;top:602.3px;width:75px;height:20.2px;background:#ececec;border:1px solid #a8a8a8;border-radius:3px"></div>
<div class="a" style="left:401.5px;top:602.9px;width:2.6px;height:2.6px;background:#ff2020;"></div>
<div class="a" style="left:405.6px;top:602.9px;width:2.6px;height:2.6px;background:#ff2020;"></div>
<div class="t" style="left:404.30px;top:606.90px;font-size:13px;font-weight:400;color:#808080;letter-spacing:-0.300px;">Směna</div>
<svg class="a" style="left:463.5px;top:610.5px" width="8" height="5" viewBox="0 0 8 5"><path d="M0 0 H7 L3.5 4 Z" fill="#222"/></svg>
<div class="a" style="left:481px;top:602.3px;width:79.5px;height:20.2px;background:#f6f0a0;border:1px solid #a8a8a8;border-radius:3px"></div>
<div class="t" style="left:485.80px;top:606.90px;font-size:13px;font-weight:400;color:#808080;letter-spacing:-0.300px;">Start</div>
<div class="a" style="left:566.6px;top:602.3px;width:79.7px;height:20.2px;background:#f6f0a0;border:1px solid #a8a8a8;border-radius:3px"></div>
<div class="t" style="left:571.00px;top:606.90px;font-size:13px;font-weight:400;color:#808080;letter-spacing:-0.300px;">Konec</div>
<div class="a" style="left:652px;top:602.3px;width:143.7px;height:20.2px;background:#f6f0a0;border:1px solid #a8a8a8;border-radius:3px"></div>
<div class="a" style="left:653.5px;top:602.9px;width:2.6px;height:2.6px;background:#ff2020;"></div>
<div class="a" style="left:657.6px;top:602.9px;width:2.6px;height:2.6px;background:#ff2020;"></div>
<div class="t" style="left:656.80px;top:606.90px;font-size:13px;font-weight:400;color:#808080;letter-spacing:-0.300px;">Pracoviště</div>
<svg class="a" style="left:784.5px;top:610.5px" width="8" height="5" viewBox="0 0 8 5"><path d="M0 0 H7 L3.5 4 Z" fill="#222"/></svg>
<svg class="a" style="left:806px;top:604px" width="18" height="15" viewBox="0 0 18 15"><path d="M1.8 7.2 Q3.2 5.6 4.6 5.9 L7 9.2 L14.6 0.9 Q16 0.6 16.6 1.6 L7.6 13.6 Q6.8 14.2 6.2 13.4 Z" fill="#ec6a2c"/></svg>
<div class="t" style="left:296.10px;top:644.82px;font-size:12.5px;font-weight:700;color:#222;letter-spacing:-0.175px;">7.12.2021</div>
<div class="t" style="left:295.60px;top:663.92px;font-size:12.5px;font-weight:700;color:#666;letter-spacing:-0.320px;">Úterý</div>
<div class="t" style="left:895.30px;top:644.82px;font-size:12.5px;font-weight:700;color:#000;letter-spacing:0.000px;">0</div>
<div class="t" style="left:1408.20px;top:644.82px;font-size:12.5px;font-weight:700;color:#000;letter-spacing:0.000px;">0</div>
<div class="a" style="left:400px;top:647.3px;width:75px;height:20.2px;background:#ececec;border:1px solid #a8a8a8;border-radius:3px"></div>
<div class="a" style="left:401.5px;top:647.9px;width:2.6px;height:2.6px;background:#ff2020;"></div>
<div class="a" style="left:405.6px;top:647.9px;width:2.6px;height:2.6px;background:#ff2020;"></div>
<div class="t" style="left:404.30px;top:651.90px;font-size:13px;font-weight:400;color:#808080;letter-spacing:-0.300px;">Směna</div>
<svg class="a" style="left:463.5px;top:655.5px" width="8" height="5" viewBox="0 0 8 5"><path d="M0 0 H7 L3.5 4 Z" fill="#222"/></svg>
<div class="a" style="left:481px;top:647.3px;width:79.5px;height:20.2px;background:#f6f0a0;border:1px solid #a8a8a8;border-radius:3px"></div>
<div class="t" style="left:485.80px;top:651.90px;font-size:13px;font-weight:400;color:#808080;letter-spacing:-0.300px;">Start</div>
<div class="a" style="left:566.6px;top:647.3px;width:79.7px;height:20.2px;background:#f6f0a0;border:1px solid #a8a8a8;border-radius:3px"></div>
<div class="t" style="left:571.00px;top:651.90px;font-size:13px;font-weight:400;color:#808080;letter-spacing:-0.300px;">Konec</div>
<div class="a" style="left:652px;top:647.3px;width:143.7px;height:20.2px;background:#f6f0a0;border:1px solid #a8a8a8;border-radius:3px"></div>
<div class="a" style="left:653.5px;top:647.9px;width:2.6px;height:2.6px;background:#ff2020;"></div>
<div class="a" style="left:657.6px;top:647.9px;width:2.6px;height:2.6px;background:#ff2020;"></div>
<div class="t" style="left:656.80px;top:651.90px;font-size:13px;font-weight:400;color:#808080;letter-spacing:-0.300px;">Pracoviště</div>
<svg class="a" style="left:784.5px;top:655.5px" width="8" height="5" viewBox="0 0 8 5"><path d="M0 0 H7 L3.5 4 Z" fill="#222"/></svg>
<svg class="a" style="left:806px;top:649px" width="18" height="15" viewBox="0 0 18 15"><path d="M1.8 7.2 Q3.2 5.6 4.6 5.9 L7 9.2 L14.6 0.9 Q16 0.6 16.6 1.6 L7.6 13.6 Q6.8 14.2 6.2 13.4 Z" fill="#ec6a2c"/></svg>
<div class="t" style="left:296.10px;top:689.82px;font-size:12.5px;font-weight:700;color:#222;letter-spacing:-0.175px;">8.12.2021</div>
<div class="t" style="left:295.60px;top:708.92px;font-size:12.5px;font-weight:700;color:#666;letter-spacing:-0.312px;">Středa</div>
<div class="t" style="left:895.30px;top:689.82px;font-size:12.5px;font-weight:700;color:#000;letter-spacing:0.000px;">0</div>
<div class="t" style="left:1408.20px;top:689.82px;font-size:12.5px;font-weight:700;color:#000;letter-spacing:0.000px;">0</div>
<div class="a" style="left:400px;top:692.3px;width:75px;height:20.2px;background:#ececec;border:1px solid #a8a8a8;border-radius:3px"></div>
<div class="a" style="left:401.5px;top:692.9px;width:2.6px;height:2.6px;background:#ff2020;"></div>
<div class="a" style="left:405.6px;top:692.9px;width:2.6px;height:2.6px;background:#ff2020;"></div>
<div class="t" style="left:404.30px;top:696.90px;font-size:13px;font-weight:400;color:#808080;letter-spacing:-0.300px;">Směna</div>
<svg class="a" style="left:463.5px;top:700.5px" width="8" height="5" viewBox="0 0 8 5"><path d="M0 0 H7 L3.5 4 Z" fill="#222"/></svg>
<div class="a" style="left:481px;top:692.3px;width:79.5px;height:20.2px;background:#f6f0a0;border:1px solid #a8a8a8;border-radius:3px"></div>
<div class="t" style="left:485.80px;top:696.90px;font-size:13px;font-weight:400;color:#808080;letter-spacing:-0.300px;">Start</div>
<div class="a" style="left:566.6px;top:692.3px;width:79.7px;height:20.2px;background:#f6f0a0;border:1px solid #a8a8a8;border-radius:3px"></div>
<div class="t" style="left:571.00px;top:696.90px;font-size:13px;font-weight:400;color:#808080;letter-spacing:-0.300px;">Konec</div>
<div class="a" style="left:652px;top:692.3px;width:143.7px;height:20.2px;background:#f6f0a0;border:1px solid #a8a8a8;border-radius:3px"></div>
<div class="a" style="left:653.5px;top:692.9px;width:2.6px;height:2.6px;background:#ff2020;"></div>
<div class="a" style="left:657.6px;top:692.9px;width:2.6px;height:2.6px;background:#ff2020;"></div>
<div class="t" style="left:656.80px;top:696.90px;font-size:13px;font-weight:400;color:#808080;letter-spacing:-0.300px;">Pracoviště</div>
<svg class="a" style="left:784.5px;top:700.5px" width="8" height="5" viewBox="0 0 8 5"><path d="M0 0 H7 L3.5 4 Z" fill="#222"/></svg>
<svg class="a" style="left:806px;top:694px" width="18" height="15" viewBox="0 0 18 15"><path d="M1.8 7.2 Q3.2 5.6 4.6 5.9 L7 9.2 L14.6 0.9 Q16 0.6 16.6 1.6 L7.6 13.6 Q6.8 14.2 6.2 13.4 Z" fill="#ec6a2c"/></svg>
<div class="t" style="left:296.10px;top:734.82px;font-size:12.5px;font-weight:700;color:#222;letter-spacing:-0.175px;">9.12.2021</div>
<div class="t" style="left:295.60px;top:753.92px;font-size:12.5px;font-weight:700;color:#666;letter-spacing:-0.287px;">Čtvrtek</div>
<div class="t" style="left:895.30px;top:734.82px;font-size:12.5px;font-weight:700;color:#000;letter-spacing:0.000px;">0</div>
<div class="t" style="left:1408.20px;top:734.82px;font-size:12.5px;font-weight:700;color:#000;letter-spacing:0.000px;">0</div>
<div class="a" style="left:400px;top:737.3px;width:75px;height:20.2px;background:#ececec;border:1px solid #a8a8a8;border-radius:3px"></div>
<div class="a" style="left:401.5px;top:737.9px;width:2.6px;height:2.6px;background:#ff2020;"></div>
<div class="a" style="left:405.6px;top:737.9px;width:2.6px;height:2.6px;background:#ff2020;"></div>
<div class="t" style="left:404.30px;top:741.90px;font-size:13px;font-weight:400;color:#808080;letter-spacing:-0.300px;">Směna</div>
<svg class="a" style="left:463.5px;top:745.5px" width="8" height="5" viewBox="0 0 8 5"><path d="M0 0 H7 L3.5 4 Z" fill="#222"/></svg>
<div class="a" style="left:481px;top:737.3px;width:79.5px;height:20.2px;background:#f6f0a0;border:1px solid #a8a8a8;border-radius:3px"></div>
<div class="t" style="left:485.80px;top:741.90px;font-size:13px;font-weight:400;color:#808080;letter-spacing:-0.300px;">Start</div>
<div class="a" style="left:566.6px;top:737.3px;width:79.7px;height:20.2px;background:#f6f0a0;border:1px solid #a8a8a8;border-radius:3px"></div>
<div class="t" style="left:571.00px;top:741.90px;font-size:13px;font-weight:400;color:#808080;letter-spacing:-0.300px;">Konec</div>
<div class="a" style="left:652px;top:737.3px;width:143.7px;height:20.2px;background:#f6f0a0;border:1px solid #a8a8a8;border-radius:3px"></div>
<div class="a" style="left:653.5px;top:737.9px;width:2.6px;height:2.6px;background:#ff2020;"></div>
<div class="a" style="left:657.6px;top:737.9px;width:2.6px;height:2.6px;background:#ff2020;"></div>
<div class="t" style="left:656.80px;top:741.90px;font-size:13px;font-weight:400;color:#808080;letter-spacing:-0.300px;">Pracoviště</div>
<svg class="a" style="left:784.5px;top:745.5px" width="8" height="5" viewBox="0 0 8 5"><path d="M0 0 H7 L3.5 4 Z" fill="#222"/></svg>
<svg class="a" style="left:806px;top:739px" width="18" height="15" viewBox="0 0 18 15"><path d="M1.8 7.2 Q3.2 5.6 4.6 5.9 L7 9.2 L14.6 0.9 Q16 0.6 16.6 1.6 L7.6 13.6 Q6.8 14.2 6.2 13.4 Z" fill="#ec6a2c"/></svg>
<div class="t" style="left:296.10px;top:779.82px;font-size:12.5px;font-weight:700;color:#222;letter-spacing:0.033px;">10.12.2021</div>
<div class="t" style="left:294.60px;top:798.92px;font-size:12.5px;font-weight:700;color:#666;letter-spacing:-0.330px;">Pátek</div>
<div class="t" style="left:895.30px;top:779.82px;font-size:12.5px;font-weight:700;color:#000;letter-spacing:0.000px;">0</div>
<div class="t" style="left:1408.20px;top:779.82px;font-size:12.5px;font-weight:700;color:#000;letter-spacing:0.000px;">0</div>
<div class="a" style="left:400px;top:782.3px;width:75px;height:20.2px;background:#ececec;border:1px solid #a8a8a8;border-radius:3px"></div>
<div class="a" style="left:401.5px;top:782.9px;width:2.6px;height:2.6px;background:#ff2020;"></div>
<div class="a" style="left:405.6px;top:782.9px;width:2.6px;height:2.6px;background:#ff2020;"></div>
<div class="t" style="left:404.30px;top:786.90px;font-size:13px;font-weight:400;color:#808080;letter-spacing:-0.300px;">Směna</div>
<svg class="a" style="left:463.5px;top:790.5px" width="8" height="5" viewBox="0 0 8 5"><path d="M0 0 H7 L3.5 4 Z" fill="#222"/></svg>
<div class="a" style="left:481px;top:782.3px;width:79.5px;height:20.2px;background:#f6f0a0;border:1px solid #a8a8a8;border-radius:3px"></div>
<div class="t" style="left:485.80px;top:786.90px;font-size:13px;font-weight:400;color:#808080;letter-spacing:-0.300px;">Start</div>
<div class="a" style="left:566.6px;top:782.3px;width:79.7px;height:20.2px;background:#f6f0a0;border:1px solid #a8a8a8;border-radius:3px"></div>
<div class="t" style="left:571.00px;top:786.90px;font-size:13px;font-weight:400;color:#808080;letter-spacing:-0.300px;">Konec</div>
<div class="a" style="left:652px;top:782.3px;width:143.7px;height:20.2px;background:#f6f0a0;border:1px solid #a8a8a8;border-radius:3px"></div>
<div class="a" style="left:653.5px;top:782.9px;width:2.6px;height:2.6px;background:#ff2020;"></div>
<div class="a" style="left:657.6px;top:782.9px;width:2.6px;height:2.6px;background:#ff2020;"></div>
<div class="t" style="left:656.80px;top:786.90px;font-size:13px;font-weight:400;color:#808080;letter-spacing:-0.300px;">Pracoviště</div>
<svg class="a" style="left:784.5px;top:790.5px" width="8" height="5" viewBox="0 0 8 5"><path d="M0 0 H7 L3.5 4 Z" fill="#222"/></svg>
<svg class="a" style="left:806px;top:784px" width="18" height="15" viewBox="0 0 18 15"><path d="M1.8 7.2 Q3.2 5.6 4.6 5.9 L7 9.2 L14.6 0.9 Q16 0.6 16.6 1.6 L7.6 13.6 Q6.8 14.2 6.2 13.4 Z" fill="#ec6a2c"/></svg>
<div class="t" style="left:296.10px;top:824.82px;font-size:12.5px;font-weight:700;color:#222;letter-spacing:0.144px;">11.12.2021</div>
<div class="t" style="left:295.60px;top:843.92px;font-size:12.5px;font-weight:700;color:#666;letter-spacing:-0.344px;">Sobota</div>
<div class="t" style="left:895.30px;top:824.82px;font-size:12.5px;font-weight:700;color:#000;letter-spacing:0.000px;">0</div>
<div class="t" style="left:1408.20px;top:824.82px;font-size:12.5px;font-weight:700;color:#000;letter-spacing:0.000px;">0</div>
<div class="t" style="left:296.10px;top:869.82px;font-size:12.5px;font-weight:700;color:#222;letter-spacing:0.033px;">12.12.2021</div>
<div class="t" style="left:294.60px;top:888.92px;font-size:12.5px;font-weight:700;color:#666;letter-spacing:-0.320px;">Neděle</div>
<div class="t" style="left:895.30px;top:869.82px;font-size:12.5px;font-weight:700;color:#000;letter-spacing:0.000px;">0</div>
<div class="t" style="left:1408.20px;top:869.82px;font-size:12.5px;font-weight:700;color:#000;letter-spacing:0.000px;">0</div>
<div class="t" style="left:296.10px;top:914.82px;font-size:12.5px;font-weight:700;color:#222;letter-spacing:0.033px;">13.12.2021</div>
<div class="t" style="left:294.60px;top:933.92px;font-size:12.5px;font-weight:700;color:#666;letter-spacing:-0.300px;">Pondělí</div>
<div class="t" style="left:895.30px;top:914.82px;font-size:12.5px;font-weight:700;color:#000;letter-spacing:0.000px;">0</div>
<div class="t" style="left:1408.20px;top:914.82px;font-size:12.5px;font-weight:700;color:#000;letter-spacing:0.000px;">0</div>
<div class="a" style="left:400px;top:917.3px;width:75px;height:20.2px;background:#ececec;border:1px solid #a8a8a8;border-radius:3px"></div>
<div class="a" style="left:401.5px;top:917.9px;width:2.6px;height:2.6px;background:#ff2020;"></div>
<div class="a" style="left:405.6px;top:917.9px;width:2.6px;height:2.6px;background:#ff2020;"></div>
<div class="t" style="left:404.30px;top:921.90px;font-size:13px;font-weight:400;color:#808080;letter-spacing:-0.300px;">Směna</div>
<svg class="a" style="left:463.5px;top:925.5px" width="8" height="5" viewBox="0 0 8 5"><path d="M0 0 H7 L3.5 4 Z" fill="#222"/></svg>
<div class="a" style="left:481px;top:917.3px;width:79.5px;height:20.2px;background:#f6f0a0;border:1px solid #a8a8a8;border-radius:3px"></div>
<div class="t" style="left:485.80px;top:921.90px;font-size:13px;font-weight:400;color:#808080;letter-spacing:-0.300px;">Start</div>
<div class="a" style="left:566.6px;top:917.3px;width:79.7px;height:20.2px;background:#f6f0a0;border:1px solid #a8a8a8;border-radius:3px"></div>
<div class="t" style="left:571.00px;top:921.90px;font-size:13px;font-weight:400;color:#808080;letter-spacing:-0.300px;">Konec</div>
<div class="a" style="left:652px;top:917.3px;width:143.7px;height:20.2px;background:#f6f0a0;border:1px solid #a8a8a8;border-radius:3px"></div>
<div class="a" style="left:653.5px;top:917.9px;width:2.6px;height:2.6px;background:#ff2020;"></div>
<div class="a" style="left:657.6px;top:917.9px;width:2.6px;height:2.6px;background:#ff2020;"></div>
<div class="t" style="left:656.80px;top:921.90px;font-size:13px;font-weight:400;color:#808080;letter-spacing:-0.300px;">Pracoviště</div>
<svg class="a" style="left:784.5px;top:925.5px" width="8" height="5" viewBox="0 0 8 5"><path d="M0 0 H7 L3.5 4 Z" fill="#222"/></svg>
<svg class="a" style="left:806px;top:919px" width="18" height="15" viewBox="0 0 18 15"><path d="M1.8 7.2 Q3.2 5.6 4.6 5.9 L7 9.2 L14.6 0.9 Q16 0.6 16.6 1.6 L7.6 13.6 Q6.8 14.2 6.2 13.4 Z" fill="#ec6a2c"/></svg>
<div class="t" style="left:296.10px;top:959.82px;font-size:12.5px;font-weight:700;color:#222;letter-spacing:0.033px;">14.12.2021</div>
<div class="t" style="left:295.60px;top:978.92px;font-size:12.5px;font-weight:700;color:#666;letter-spacing:-0.320px;">Úterý</div>
<div class="t" style="left:895.30px;top:959.82px;font-size:12.5px;font-weight:700;color:#000;letter-spacing:0.000px;">0</div>
<div class="t" style="left:1408.20px;top:959.82px;font-size:12.5px;font-weight:700;color:#000;letter-spacing:0.000px;">0</div>
<div class="a" style="left:400px;top:962.3px;width:75px;height:20.2px;background:#ececec;border:1px solid #a8a8a8;border-radius:3px"></div>
<div class="a" style="left:401.5px;top:962.9px;width:2.6px;height:2.6px;background:#ff2020;"></div>
<div class="a" style="left:405.6px;top:962.9px;width:2.6px;height:2.6px;background:#ff2020;"></div>
<div class="t" style="left:404.30px;top:966.90px;font-size:13px;font-weight:400;color:#808080;letter-spacing:-0.300px;">Směna</div>
<svg class="a" style="left:463.5px;top:970.5px" width="8" height="5" viewBox="0 0 8 5"><path d="M0 0 H7 L3.5 4 Z" fill="#222"/></svg>
<div class="a" style="left:481px;top:962.3px;width:79.5px;height:20.2px;background:#f6f0a0;border:1px solid #a8a8a8;border-radius:3px"></div>
<div class="t" style="left:485.80px;top:966.90px;font-size:13px;font-weight:400;color:#808080;letter-spacing:-0.300px;">Start</div>
<div class="a" style="left:566.6px;top:962.3px;width:79.7px;height:20.2px;background:#f6f0a0;border:1px solid #a8a8a8;border-radius:3px"></div>
<div class="t" style="left:571.00px;top:966.90px;font-size:13px;font-weight:400;color:#808080;letter-spacing:-0.300px;">Konec</div>
<div class="a" style="left:652px;top:962.3px;width:143.7px;height:20.2px;background:#f6f0a0;border:1px solid #a8a8a8;border-radius:3px"></div>
<div class="a" style="left:653.5px;top:962.9px;width:2.6px;height:2.6px;background:#ff2020;"></div>
<div class="a" style="left:657.6px;top:962.9px;width:2.6px;height:2.6px;background:#ff2020;"></div>
<div class="t" style="left:656.80px;top:966.90px;font-size:13px;font-weight:400;color:#808080;letter-spacing:-0.300px;">Pracoviště</div>
<svg class="a" style="left:784.5px;top:970.5px" width="8" height="5" viewBox="0 0 8 5"><path d="M0 0 H7 L3.5 4 Z" fill="#222"/></svg>
<svg class="a" style="left:806px;top:964px" width="18" height="15" viewBox="0 0 18 15"><path d="M1.8 7.2 Q3.2 5.6 4.6 5.9 L7 9.2 L14.6 0.9 Q16 0.6 16.6 1.6 L7.6 13.6 Q6.8 14.2 6.2 13.4 Z" fill="#ec6a2c"/></svg>
<div class="t" style="left:296.10px;top:1004.82px;font-size:12.5px;font-weight:700;color:#222;letter-spacing:0.033px;">15.12.2021</div>
<div class="t" style="left:295.60px;top:1023.92px;font-size:12.5px;font-weight:700;color:#666;letter-spacing:-0.312px;">Středa</div>
<div class="t" style="left:895.30px;top:1004.82px;font-size:12.5px;font-weight:700;color:#000;letter-spacing:0.000px;">0</div>
<div class="t" style="left:1408.20px;top:1004.82px;font-size:12.5px;font-weight:700;color:#000;letter-spacing:0.000px;">0</div>
<div class="a" style="left:400px;top:1007.3px;width:75px;height:20.2px;background:#ececec;border:1px solid #a8a8a8;border-radius:3px"></div>
<div class="a" style="left:401.5px;top:1007.9px;width:2.6px;height:2.6px;background:#ff2020;"></div>
<div class="a" style="left:405.6px;top:1007.9px;width:2.6px;height:2.6px;background:#ff2020;"></div>
<div class="t" style="left:404.30px;top:1011.90px;font-size:13px;font-weight:400;color:#808080;letter-spacing:-0.300px;">Směna</div>
<svg class="a" style="left:463.5px;top:1015.5px" width="8" height="5" viewBox="0 0 8 5"><path d="M0 0 H7 L3.5 4 Z" fill="#222"/></svg>
<div class="a" style="left:481px;top:1007.3px;width:79.5px;height:20.2px;background:#f6f0a0;border:1px solid #a8a8a8;border-radius:3px"></div>
<div class="t" style="left:485.80px;top:1011.90px;font-size:13px;font-weight:400;color:#808080;letter-spacing:-0.300px;">Start</div>
<div class="a" style="left:566.6px;top:1007.3px;width:79.7px;height:20.2px;background:#f6f0a0;border:1px solid #a8a8a8;border-radius:3px"></div>
<div class="t" style="left:571.00px;top:1011.90px;font-size:13px;font-weight:400;color:#808080;letter-spacing:-0.300px;">Konec</div>
<div class="a" style="left:652px;top:1007.3px;width:143.7px;height:20.2px;background:#f6f0a0;border:1px solid #a8a8a8;border-radius:3px"></div>
<div class="a" style="left:653.5px;top:1007.9px;width:2.6px;height:2.6px;background:#ff2020;"></div>
<div class="a" style="left:657.6px;top:1007.9px;width:2.6px;height:2.6px;background:#ff2020;"></div>
<div class="t" style="left:656.80px;top:1011.90px;font-size:13px;font-weight:400;color:#808080;letter-spacing:-0.300px;">Pracoviště</div>
<svg class="a" style="left:784.5px;top:1015.5px" width="8" height="5" viewBox="0 0 8 5"><path d="M0 0 H7 L3.5 4 Z" fill="#222"/></svg>
<svg class="a" style="left:806px;top:1009px" width="18" height="15" viewBox="0 0 18 15"><path d="M1.8 7.2 Q3.2 5.6 4.6 5.9 L7 9.2 L14.6 0.9 Q16 0.6 16.6 1.6 L7.6 13.6 Q6.8 14.2 6.2 13.4 Z" fill="#ec6a2c"/></svg>
<div class="t" style="left:296.10px;top:1049.82px;font-size:12.5px;font-weight:700;color:#222;letter-spacing:0.033px;">16.12.2021</div>
<div class="t" style="left:295.60px;top:1068.92px;font-size:12.5px;font-weight:700;color:#666;letter-spacing:-0.287px;">Čtvrtek</div>
<div class="t" style="left:895.30px;top:1049.82px;font-size:12.5px;font-weight:700;color:#000;letter-spacing:0.000px;">0</div>
<div class="t" style="left:1408.20px;top:1049.82px;font-size:12.5px;font-weight:700;color:#000;letter-spacing:0.000px;">0</div>
<div class="a" style="left:400px;top:1052.3px;width:75px;height:20.2px;background:#ececec;border:1px solid #a8a8a8;border-radius:3px"></div>
<div class="a" style="left:401.5px;top:1052.8999999999999px;width:2.6px;height:2.6px;background:#ff2020;"></div>
<div class="a" style="left:405.6px;top:1052.8999999999999px;width:2.6px;height:2.6px;background:#ff2020;"></div>
<div class="t" style="left:404.30px;top:1056.90px;font-size:13px;font-weight:400;color:#808080;letter-spacing:-0.300px;">Směna</div>
<svg class="a" style="left:463.5px;top:1060.5px" width="8" height="5" viewBox="0 0 8 5"><path d="M0 0 H7 L3.5 4 Z" fill="#222"/></svg>
<div class="a" style="left:481px;top:1052.3px;width:79.5px;height:20.2px;background:#f6f0a0;border:1px solid #a8a8a8;border-radius:3px"></div>
<div class="t" style="left:485.80px;top:1056.90px;font-size:13px;font-weight:400;color:#808080;letter-spacing:-0.300px;">Start</div>
<div class="a" style="left:566.6px;top:1052.3px;width:79.7px;height:20.2px;background:#f6f0a0;border:1px solid #a8a8a8;border-radius:3px"></div>
<div class="t" style="left:571.00px;top:1056.90px;font-size:13px;font-weight:400;color:#808080;letter-spacing:-0.300px;">Konec</div>
<div class="a" style="left:652px;top:1052.3px;width:143.7px;height:20.2px;background:#f6f0a0;border:1px solid #a8a8a8;border-radius:3px"></div>
<div class="a" style="left:653.5px;top:1052.8999999999999px;width:2.6px;height:2.6px;background:#ff2020;"></div>
<div class="a" style="left:657.6px;top:1052.8999999999999px;width:2.6px;height:2.6px;background:#ff2020;"></div>
<div class="t" style="left:656.80px;top:1056.90px;font-size:13px;font-weight:400;color:#808080;letter-spacing:-0.300px;">Pracoviště</div>
<svg class="a" style="left:784.5px;top:1060.5px" width="8" height="5" viewBox="0 0 8 5"><path d="M0 0 H7 L3.5 4 Z" fill="#222"/></svg>
<svg class="a" style="left:806px;top:1054px" width="18" height="15" viewBox="0 0 18 15"><path d="M1.8 7.2 Q3.2 5.6 4.6 5.9 L7 9.2 L14.6 0.9 Q16 0.6 16.6 1.6 L7.6 13.6 Q6.8 14.2 6.2 13.4 Z" fill="#ec6a2c"/></svg>
</div>
<div class="a" style="left:262px;top:1067px;width:1645px;height:13px;background:#f1f1f1;"></div>
<svg class="a" style="left:265px;top:1069px" width="8" height="10" viewBox="0 0 8 10"><path d="M6 1 V9 L2 5 Z" fill="#a3a3a3"/></svg>
<svg class="a" style="left:1897px;top:1069px" width="8" height="10" viewBox="0 0 8 10"><path d="M2 1 V9 L6 5 Z" fill="#a3a3a3"/></svg>
<div class="a" style="left:1907px;top:1067px;width:13px;height:13px;background:#dcdcdc;"></div>
<svg class="a" style="left:0px;top:0px" width="1920" height="1080" viewBox="0 0 1920 1080"><line x1="426.7" y1="399.7" x2="553.5" y2="562" stroke="#000" stroke-width="2.2"/></svg>
<div class="a" style="left:553px;top:561.5px;width:291px;height:136.2px;background:rgba(255,196,0,0.82);border:2.2px solid #000"></div>
<div class="t" style="left:613.30px;top:593.29px;font-size:32.5px;font-weight:400;color:#000;letter-spacing:0.018px;">Tlačítko pro</div>
<div class="t" style="left:598.00px;top:635.79px;font-size:32.5px;font-weight:400;color:#000;letter-spacing:0.083px;">editaci směny</div>
</body></html>
